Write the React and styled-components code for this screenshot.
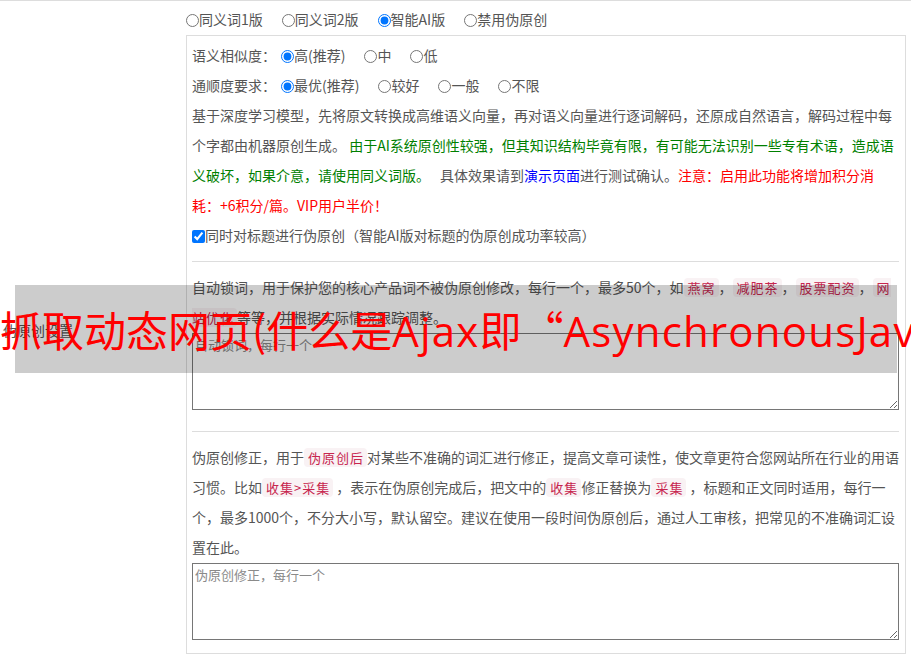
import React from "react";
import styled, { createGlobalStyle } from "styled-components";

const GlobalStyle = createGlobalStyle`
  html, body {
    margin: 0;
    padding: 0;
    overflow: hidden;
    background: #fff;
  }
  body {
    font-family: "Noto Sans CJK SC", "Noto Sans", sans-serif;
    font-size: 14px;
    color: #555;
  }
`;

const Page = styled.div`
  position: relative;
  display: grid;
  grid-template-columns: 181px 1fr;
  border-top: 1px solid #ddd;
`;

const SideLabel = styled.div`
  align-self: center;
  padding-left: 3px;
  font-size: 14px;
  line-height: 30px;
  color: #555;
`;

const Main = styled.div`
  padding: 3px 0 4px 0;
  min-width: 0;
`;

const OptionRow = styled.div`
  height: 30px;
  line-height: 30px;
  white-space: nowrap;
`;

const Option = styled.label`
  margin-right: 14px;
  color: #555;
`;

const Radio = styled.input.attrs({ type: "radio" })`
  width: 13px;
  height: 13px;
  margin: 0 0 0 5px;
  vertical-align: -2px;
`;

const Panel = styled.div`
  margin: 1px 5px 0 5px;
  border: 1px solid #ddd;
  padding: 4px 6px 13px 5px;
`;

const Para = styled.div`
  line-height: 30px;
  color: #555;
`;

const Green = styled.span`
  color: #008000;
`;
const Blue = styled.span`
  color: #0000ff;
`;
const Red = styled.span`
  color: #ff0000;
`;

const Gap = styled.span`
  display: inline-block;
  width: ${(p) => p.$w}px;
`;

const Check = styled.input.attrs({ type: "checkbox" })`
  width: 13px;
  height: 13px;
  margin: 0;
  vertical-align: -2px;
`;

const Divider = styled.div`
  border-top: 1px solid #ddd;
  margin: ${(p) => p.$top}px 0 10px 0;
`;

const Code = styled.code`
  font-family: "Noto Sans CJK SC", sans-serif;
  font-size: 13px;
  line-height: 18px;
  letter-spacing: 1px;
  color: #c7254e;
  background: #f9f2f4;
  border-radius: 4px;
  padding: 0 3px 0 4px;
`;

const Area = styled.textarea`
  display: block;
  box-sizing: border-box;
  width: 707px;
  height: 77px;
  margin: 1px 0 0 0;
  padding: 2px;
  border: 1px solid #767676;
  border-radius: 0;
  font-family: "Noto Sans CJK SC", sans-serif;
  font-size: 13px;
  line-height: 18px;
  color: #333;
  &::placeholder {
    color: #8a8a8a;
  }
`;

const Overlay = styled.div`
  position: absolute;
  left: 15px;
  top: 284px;
  width: 882px;
  height: 88px;
  background: rgba(0, 0, 0, 0.2);
`;

const OverlayText = styled.div`
  position: absolute;
  left: -15px;
  top: 0;
  line-height: 88px;
  font-size: 42px;
  color: #ff0000;
  white-space: nowrap;
  font-family: "Noto Sans CJK SC", sans-serif;
`;

const Latin = styled.span`
  font-family: "Open Sans", "Noto Sans CJK SC", sans-serif;
  letter-spacing: 1.2px;
`;

export default function App() {
  return (
    <>
      <GlobalStyle />
      <Page>
        <SideLabel>伪原创设置</SideLabel>
        <Main>
          <OptionRow>
            <Option><Radio name="mode" />同义词1版</Option>
            <Option><Radio name="mode" />同义词2版</Option>
            <Option><Radio name="mode" defaultChecked />智能AI版</Option>
            <Option><Radio name="mode" />禁用伪原创</Option>
          </OptionRow>
          <Panel>
            <OptionRow>
              语义相似度：
              <Option><Radio name="sim" defaultChecked />高(推荐)</Option>
              <Option><Radio name="sim" />中</Option>
              <Option><Radio name="sim" />低</Option>
            </OptionRow>
            <OptionRow>
              通顺度要求：
              <Option><Radio name="flu" defaultChecked />最优(推荐)</Option>
              <Option><Radio name="flu" />较好</Option>
              <Option><Radio name="flu" />一般</Option>
              <Option><Radio name="flu" />不限</Option>
            </OptionRow>
            <Para>
              基于深度学习模型，先将原文转换成高维语义向量，再对语义向量进行逐词解码，还原成自然语言，解码过程中每个字都由机器原创生成。{" "}
              <Green>由于AI系统原创性较强，但其知识结构毕竟有限，有可能无法识别一些专有术语，造成语义破坏，如果介意，请使用同义词版。</Green>
              <Gap $w={10} />
              具体效果请到<Blue>演示页面</Blue>进行测试确认。
              <Red>注意：启用此功能将增加积分消耗：+6积分/篇。VIP用户半价！</Red>
            </Para>
            <Para>
              <label><Check defaultChecked />同时对标题进行伪原创（智能AI版对标题的伪原创成功率较高）</label>
            </Para>
            <Divider $top={11} />
            <Para>
              自动锁词，用于保护您的核心产品词不被伪原创修改，每行一个，最多50个，如<Code>燕窝</Code>，<Code>减肥茶</Code>，<Code>股票配资</Code>，<Code>网站优化</Code>等等，并根据实际情况跟踪调整。
            </Para>
            <Area placeholder="自动锁词，每行一个" />
            <Divider $top={21} />
            <Para>
              伪原创修正，用于<Code>伪原创后</Code>对某些不准确的词汇进行修正，提高文章可读性，使文章更符合您网站所在行业的用语习惯。比如<Code>收集&gt;采集</Code> ，表示在伪原创完成后，把文中的<Code>收集</Code>修正替换为<Code>采集</Code> ，标题和正文同时适用，每行一个，最多1000个，不分大小写，默认留空。建议在使用一段时间伪原创后，通过人工审核，把常见的不准确词汇设置在此。
            </Para>
            <Area placeholder="伪原创修正，每行一个" />
          </Panel>
        </Main>
        <Overlay>
          <OverlayText>
            抓取动态网页(什么是<Latin>Ajax</Latin>即“<Latin>AsynchronousJavascriptAndXML</Latin>”)
          </OverlayText>
        </Overlay>
      </Page>
    </>
  );
}
